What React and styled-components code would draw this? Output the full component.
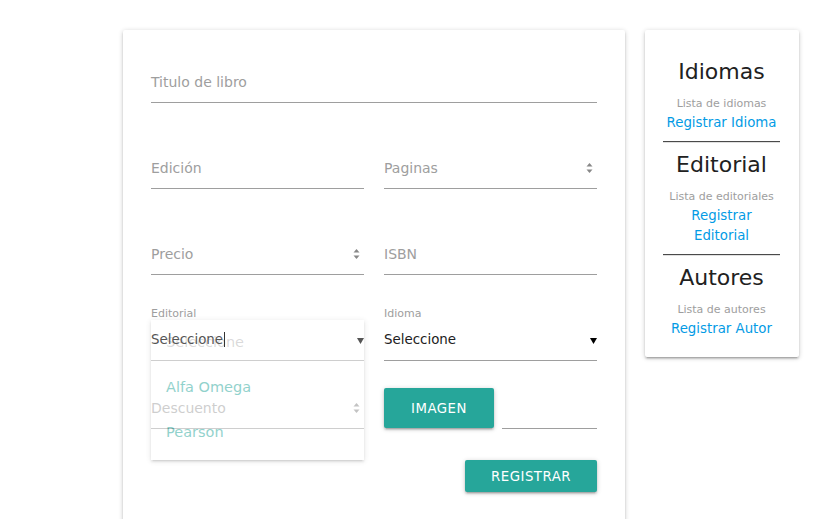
import React from "react";
import styled, { createGlobalStyle } from "styled-components";

const GlobalStyle = createGlobalStyle`
  html, body { margin: 0; padding: 0; background: #fff; }
  body { font-family: "DejaVu Sans", "Liberation Sans", sans-serif; }
  * { box-sizing: border-box; }
`;

const shadow = "0 2px 2px 0 rgba(0,0,0,.14), 0 3px 1px -2px rgba(0,0,0,.12), 0 1px 5px 0 rgba(0,0,0,.2)";

const Page = styled.div`
  display: flex;
  align-items: flex-start;
  gap: 20px;
  padding: 30px 0 0 123px;
  height: 519px;
  overflow: hidden;
`;

const MainCard = styled.div`
  width: 502px;
  height: 540px;
  flex: none;
  background: #fff;
  border-radius: 2px;
  box-shadow: ${shadow};
  padding: 32px 28px 0;
`;

const Row = styled.div`
  display: grid;
  grid-template-columns: ${(p) => (p.$full ? "1fr" : "213px 213px")};
  column-gap: 20px;
  margin-top: ${(p) => p.$top || 0}px;
`;

const Field = styled.div`
  position: relative;
`;

const Input = styled.div`
  position: relative;
  height: 41px;
  line-height: 40px;
  font-size: ${(p) => (p.$value ? "13.4px" : "14px")};
  color: ${(p) => (p.$value ? "#212121" : "#9e9e9e")};
  border-bottom: 1px solid #9e9e9e;
`;

const Label = styled.span`
  position: absolute;
  left: 0;
  top: -13px;
  font-size: 11px;
  line-height: 14px;
  color: #9e9e9e;
`;

const Spin = styled.svg`
  position: absolute;
  right: 4px;
  top: 14px;
`;

const Arrow = styled.svg`
  position: absolute;
  right: 0;
  top: 18px;
  z-index: 2;
`;

const SelectValue = styled.div`
  position: relative;
  z-index: 2;
  height: 41px;
  line-height: 39px;
  font-size: 13.4px;
  color: #555;
`;

const Caret = styled.span`
  display: inline-block;
  width: 1px;
  height: 15px;
  background: #333;
  vertical-align: middle;
  margin-left: 1px;
  margin-top: -2px;
`;

const Dropdown = styled.ul`
  position: absolute;
  z-index: 1;
  top: 0;
  left: 0;
  width: 213px;
  height: 140px;
  margin: 0;
  padding: 0;
  list-style: none;
  background: #fff;
  opacity: 0.5;
  box-shadow: ${shadow};
`;

const Option = styled.li`
  height: 45px;
  line-height: 45px;
  padding-left: 15px;
  font-size: 14.5px;
  color: ${(p) => (p.$disabled ? "rgba(0,0,0,.3)" : "#26a69a")};
`;

const FileRow = styled.div`
  display: flex;
  align-items: flex-start;
  gap: 8px;
`;

const Button = styled.button`
  flex: none;
  width: ${(p) => p.$w}px;
  height: ${(p) => p.$h}px;
  padding: 0;
  border: none;
  border-radius: 2px;
  background: #26a69a;
  color: #fff;
  font-family: inherit;
  font-size: 13.3px;
  letter-spacing: 0.5px;
  text-transform: uppercase;
  box-shadow: ${shadow};
`;

const FilePath = styled.div`
  flex: 1;
  height: 41px;
  border-bottom: 1px solid #9e9e9e;
`;

const Actions = styled.div`
  display: flex;
  justify-content: flex-end;
  margin-top: 31px;
`;

const Side = styled.div`
  width: 154px;
  flex: none;
  background: #fff;
  border-radius: 2px;
  box-shadow: ${shadow};
  padding: 30px 19px 18px 18px;
  text-align: center;
`;

const Heading = styled.h4`
  margin: 0 0 11px;
  font-size: 22px;
  line-height: 24px;
  font-weight: 400;
  color: #212121;
`;

const Sub = styled.div`
  font-size: 11px;
  line-height: 18px;
  color: #9e9e9e;
`;

const Link = styled.a`
  display: block;
  font-size: 13.33px;
  line-height: 20px;
  color: #039be5;
  text-decoration: none;
`;

const Divider = styled.hr`
  margin: 8px 0 10px;
  height: 0;
  border: none;
  border-top: 1px solid #4a4a4a;
  border-bottom: 1px solid #e0e0e0;
`;

const SpinIcon = () => (
  <Spin width="7" height="12" viewBox="0 0 7 12">
    <polygon points="0.5,4.5 3.5,1 6.5,4.5" fill="#888" />
    <polygon points="0.5,7.5 6.5,7.5 3.5,11" fill="#888" />
  </Spin>
);

const ArrowIcon = ({ color }) => (
  <Arrow width="7" height="6" viewBox="0 0 7 6">
    <polygon points="0,0 7,0 3.5,6" fill={color} />
  </Arrow>
);

const sections = [
  { title: "Idiomas", sub: "Lista de idiomas", link: "Registrar Idioma" },
  { title: "Editorial", sub: "Lista de editoriales", link: "Registrar Editorial" },
  { title: "Autores", sub: "Lista de autores", link: "Registrar Autor" },
];

export default function App() {
  return (
    <>
      <GlobalStyle />
      <Page>
        <MainCard>
          <Row $full>
            <Input>Titulo de libro</Input>
          </Row>
          <Row $top={45}>
            <Input>Edición</Input>
            <Input>
              Paginas
              <SpinIcon />
            </Input>
          </Row>
          <Row $top={45}>
            <Input>
              Precio
              <SpinIcon />
            </Input>
            <Input>ISBN</Input>
          </Row>
          <Row $top={45}>
            <Field>
              <Label>Editorial</Label>
              <SelectValue>
                Seleccione
                <Caret />
              </SelectValue>
              <ArrowIcon color="#555" />
              <Dropdown>
                <Option $disabled>Seleccione</Option>
                <Option>Alfa Omega</Option>
                <Option>Pearson</Option>
              </Dropdown>
              <Input style={{ position: "absolute", inset: 0 }} />
            </Field>
            <Field>
              <Label>Idioma</Label>
              <Input $value style={{ lineHeight: "39px" }}>
                Seleccione
                <ArrowIcon color="#000" />
              </Input>
            </Field>
          </Row>
          <Row $top={27}>
            <Input>
              Descuento
              <SpinIcon />
            </Input>
            <FileRow>
              <Button $w={110} $h={40}>Imagen</Button>
              <FilePath />
            </FileRow>
          </Row>
          <Actions>
            <Button $w={132} $h={32}>Registrar</Button>
          </Actions>
        </MainCard>
        <Side>
          {sections.map((s, i) => (
            <React.Fragment key={s.title}>
              {i > 0 && <Divider />}
              <Heading>{s.title}</Heading>
              <Sub>{s.sub}</Sub>
              <Link href="#">{s.link}</Link>
            </React.Fragment>
          ))}
        </Side>
      </Page>
    </>
  );
}
